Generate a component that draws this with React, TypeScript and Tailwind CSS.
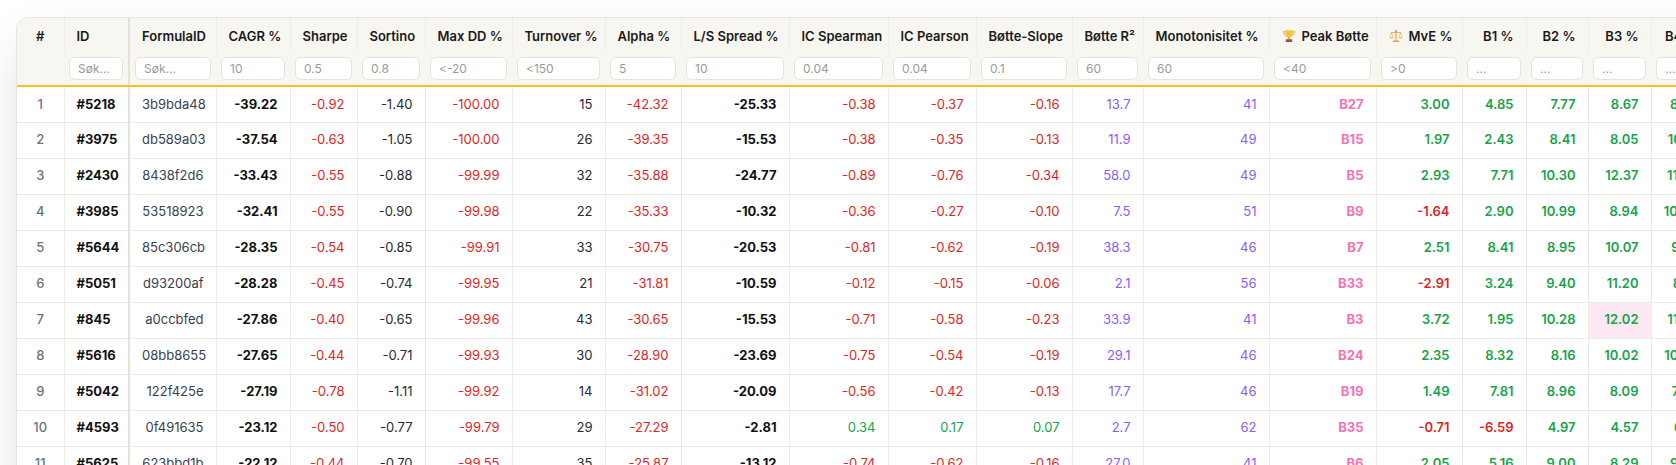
import React from "react";

type Row = {
  n: number;
  id: string;
  fid: string;
  cagr: number;
  sharpe: number;
  sortino: number;
  maxdd: number;
  turnover: number;
  alpha: number;
  ls: number;
  ics: number;
  icp: number;
  slope: number;
  r2: number;
  mono: number;
  peak: number;
  mve: number;
  b: number[];
};

const rows: Row[] = [
  { n: 1, id: "#5218", fid: "3b9bda48", cagr: -39.22, sharpe: -0.92, sortino: -1.4, maxdd: -100, turnover: 15, alpha: -42.32, ls: -25.33, ics: -0.38, icp: -0.37, slope: -0.16, r2: 13.7, mono: 41, peak: 27, mve: 3.0, b: [4.85, 7.77, 8.67, 8.92, 9.14] },
  { n: 2, id: "#3975", fid: "db589a03", cagr: -37.54, sharpe: -0.63, sortino: -1.05, maxdd: -100, turnover: 26, alpha: -39.35, ls: -15.53, ics: -0.38, icp: -0.35, slope: -0.13, r2: 11.9, mono: 49, peak: 15, mve: 1.97, b: [2.43, 8.41, 8.05, 10.14, 9.62] },
  { n: 3, id: "#2430", fid: "8438f2d6", cagr: -33.43, sharpe: -0.55, sortino: -0.88, maxdd: -99.99, turnover: 32, alpha: -35.88, ls: -24.77, ics: -0.89, icp: -0.76, slope: -0.34, r2: 58.0, mono: 49, peak: 5, mve: 2.93, b: [7.71, 10.3, 12.37, 11.58, 13.02] },
  { n: 4, id: "#3985", fid: "53518923", cagr: -32.41, sharpe: -0.55, sortino: -0.9, maxdd: -99.98, turnover: 22, alpha: -35.33, ls: -10.32, ics: -0.36, icp: -0.27, slope: -0.1, r2: 7.5, mono: 51, peak: 9, mve: -1.64, b: [2.9, 10.99, 8.94, 10.46, 9.31] },
  { n: 5, id: "#5644", fid: "85c306cb", cagr: -28.35, sharpe: -0.54, sortino: -0.85, maxdd: -99.91, turnover: 33, alpha: -30.75, ls: -20.53, ics: -0.81, icp: -0.62, slope: -0.19, r2: 38.3, mono: 46, peak: 7, mve: 2.51, b: [8.41, 8.95, 10.07, 9.73, 10.88] },
  { n: 6, id: "#5051", fid: "d93200af", cagr: -28.28, sharpe: -0.45, sortino: -0.74, maxdd: -99.95, turnover: 21, alpha: -31.81, ls: -10.59, ics: -0.12, icp: -0.15, slope: -0.06, r2: 2.1, mono: 56, peak: 33, mve: -2.91, b: [3.24, 9.4, 11.2, 8.61, 7.95] },
  { n: 7, id: "#845", fid: "a0ccbfed", cagr: -27.86, sharpe: -0.4, sortino: -0.65, maxdd: -99.96, turnover: 43, alpha: -30.65, ls: -15.53, ics: -0.71, icp: -0.58, slope: -0.23, r2: 33.9, mono: 41, peak: 3, mve: 3.72, b: [1.95, 10.28, 12.02, 11.35, 10.4] },
  { n: 8, id: "#5616", fid: "08bb8655", cagr: -27.65, sharpe: -0.44, sortino: -0.71, maxdd: -99.93, turnover: 30, alpha: -28.9, ls: -23.69, ics: -0.75, icp: -0.54, slope: -0.19, r2: 29.1, mono: 46, peak: 24, mve: 2.35, b: [8.32, 8.16, 10.02, 10.88, 9.57] },
  { n: 9, id: "#5042", fid: "122f425e", cagr: -27.19, sharpe: -0.78, sortino: -1.11, maxdd: -99.92, turnover: 14, alpha: -31.02, ls: -20.09, ics: -0.56, icp: -0.42, slope: -0.13, r2: 17.7, mono: 46, peak: 19, mve: 1.49, b: [7.81, 8.96, 8.09, 7.94, 8.73] },
  { n: 10, id: "#4593", fid: "0f491635", cagr: -23.12, sharpe: -0.5, sortino: -0.77, maxdd: -99.79, turnover: 29, alpha: -27.29, ls: -2.81, ics: 0.34, icp: 0.17, slope: 0.07, r2: 2.7, mono: 62, peak: 35, mve: -0.71, b: [-6.59, 4.97, 4.57, 6.12, 5.48] },
  { n: 11, id: "#5625", fid: "623bbd1b", cagr: -22.12, sharpe: -0.44, sortino: -0.7, maxdd: -99.55, turnover: 35, alpha: -25.87, ls: -13.12, ics: -0.74, icp: -0.62, slope: -0.16, r2: 27.0, mono: 41, peak: 6, mve: 2.05, b: [5.16, 9.0, 8.29, 9.05, 8.66] },
];

const Trophy = () => (
  <svg viewBox="0 0 16 16" className="w-[14px] h-[14px] inline-block mr-1.5 -mt-0.5">
    <path d="M4 3H2v1.4A2.6 2.6 0 0 0 4.6 7" stroke="#f2b632" strokeWidth="1.3" fill="none" />
    <path d="M12 3h2v1.4A2.6 2.6 0 0 1 11.4 7" stroke="#f2b632" strokeWidth="1.3" fill="none" />
    <path d="M4 1.5h8v4.2a4 4 0 0 1-8 0z" fill="#f7c242" />
    <rect x="7" y="9.4" width="2" height="2.6" fill="#e0a526" />
    <rect x="4.3" y="11.8" width="7.4" height="3" rx="0.6" fill="#8d5b3a" />
  </svg>
);

const Scale = () => (
  <svg viewBox="0 0 16 16" className="w-[14px] h-[14px] inline-block mr-1.5 -mt-0.5">
    <rect x="7.4" y="2" width="1.2" height="11.5" fill="#e29a3a" />
    <circle cx="8" cy="2.2" r="1.2" fill="#e29a3a" />
    <rect x="2" y="3.6" width="12" height="1.1" rx="0.5" fill="#e29a3a" />
    <path d="M3 4.6 1.3 9M3 4.6 4.7 9M13 4.6 11.3 9M13 4.6 14.7 9" stroke="#e29a3a" strokeWidth="0.6" />
    <path d="M0.8 9h4.4a2.2 2.2 0 0 1-4.4 0z" fill="#f5c46e" />
    <path d="M10.8 9h4.4a2.2 2.2 0 0 1-4.4 0z" fill="#f5c46e" />
    <rect x="4.5" y="13.2" width="7" height="1.6" rx="0.6" fill="#e29a3a" />
  </svg>
);

const widths = [
  "w-[47px]", "w-[65px]", "w-[87px]", "w-[74px]", "w-[67px]", "w-[68px]", "w-[87px]",
  "w-[93px]", "w-[76px]", "w-[108px]", "w-[99px]", "w-[88px]", "w-[96px]", "w-[71px]",
  "w-[126px]", "w-[107px]", "w-[86px]", "w-[64px]", "w-[62px]", "w-[63px]", "w-[60px]", "w-[63px]",
];

const headers: { label: React.ReactNode; filter?: string }[] = [
  { label: "#" },
  { label: "ID", filter: "Søk..." },
  { label: "FormulaID", filter: "Søk..." },
  { label: "CAGR %", filter: "10" },
  { label: "Sharpe", filter: "0.5" },
  { label: "Sortino", filter: "0.8" },
  { label: "Max DD %", filter: "<-20" },
  { label: "Turnover %", filter: "<150" },
  { label: "Alpha %", filter: "5" },
  { label: "L/S Spread %", filter: "10" },
  { label: "IC Spearman", filter: "0.04" },
  { label: "IC Pearson", filter: "0.04" },
  { label: "Bøtte-Slope", filter: "0.1" },
  { label: "Bøtte R²", filter: "60" },
  { label: "Monotonisitet %", filter: "60" },
  { label: <><Trophy />Peak Bøtte</>, filter: "<40" },
  { label: <><Scale />MvE %</>, filter: ">0" },
  { label: "B1 %", filter: "..." },
  { label: "B2 %", filter: "..." },
  { label: "B3 %", filter: "..." },
  { label: "B4 %", filter: "..." },
  { label: "B5 %", filter: "..." },
];

const sign = (v: number) => (v < 0 ? "text-[#dc2626]" : "text-[#16a34a]");
const f2 = (v: number) => v.toFixed(2);

const td = "h-[36px] px-3 border-b border-r border-[#eeebe5] text-right whitespace-nowrap";

export default function App() {
  return (
    <div
      className="h-screen w-screen overflow-hidden bg-white text-[13px] text-[#1f2937]"
      style={{ fontFamily: "Inter, 'Noto Sans', sans-serif" }}
    >
      <div className="ml-4 mt-[17px] w-max rounded-tl-xl border border-[#e8e5de] overflow-hidden shadow-[0_24px_60px_-10px_rgba(0,0,0,0.16)] bg-white">
        <table className="table-fixed border-collapse w-[1757px]">
          <colgroup>
            {widths.map((w, i) => (
              <col key={i} className={w} />
            ))}
          </colgroup>
          <thead className="bg-[#f8f6f1]">
            <tr>
              {headers.map((h, i) => (
                <th
                  key={i}
                  className={`h-[33px] pt-1 px-3 font-semibold text-[#1a1a1a] whitespace-nowrap border-r border-[#efece5] ${
                    i === 0 ? "text-center" : i === 1 ? "text-left border-r-2 border-r-[#e6e2da]" : "text-right"
                  }`}
                >
                  {h.label}
                </th>
              ))}
            </tr>
            <tr>
              {headers.map((h, i) => (
                <th
                  key={i}
                  className={`h-[35px] px-[5px] border-b-2 border-b-[#fbbf24] font-normal ${
                    i === 1 ? "border-r-2 border-r-[#e6e2da]" : ""
                  }`}
                >
                  {h.filter && (
                    <input
                      placeholder={h.filter}
                      className="w-full h-[23px] px-2 rounded-md border border-[#e6e3dc] bg-white text-[12px] placeholder:text-[#9a9a9a] outline-none"
                    />
                  )}
                </th>
              ))}
            </tr>
          </thead>
          <tbody>
            {rows.map((r) => (
              <tr key={r.n}>
                <td className={`${td} !text-center text-[#6b7280] font-medium`}>{r.n}</td>
                <td className={`${td} !text-left font-bold text-[#111] border-r-2 border-r-[#e6e2da]`}>{r.id}</td>
                <td className={`${td} text-[#374151]`}>{r.fid}</td>
                <td className={`${td} font-bold text-[#111]`}>{f2(r.cagr)}</td>
                <td className={`${td} ${sign(r.sharpe)}`}>{f2(r.sharpe)}</td>
                <td className={`${td} text-[#1f2937]`}>{f2(r.sortino)}</td>
                <td className={`${td} text-[#dc2626]`}>{f2(r.maxdd)}</td>
                <td className={`${td} text-[#1f2937]`}>{r.turnover}</td>
                <td className={`${td} ${sign(r.alpha)}`}>{f2(r.alpha)}</td>
                <td className={`${td} font-bold text-[#111]`}>{f2(r.ls)}</td>
                <td className={`${td} ${sign(r.ics)}`}>{f2(r.ics)}</td>
                <td className={`${td} ${sign(r.icp)}`}>{f2(r.icp)}</td>
                <td className={`${td} ${sign(r.slope)}`}>{f2(r.slope)}</td>
                <td className={`${td} text-[#8b5cf6]`}>{r.r2.toFixed(1)}</td>
                <td className={`${td} text-[#8b5cf6]`}>{r.mono}</td>
                <td className={`${td} font-bold text-[#f472b6]`}>B{r.peak}</td>
                <td className={`${td} font-semibold ${sign(r.mve)}`}>{f2(r.mve)}</td>
                {r.b.map((v, i) => (
                  <td
                    key={i}
                    className={`${td} font-semibold ${sign(v)} ${r.peak === i + 1 ? "bg-[#fce7f3]" : ""}`}
                  >
                    {f2(v)}
                  </td>
                ))}
              </tr>
            ))}
          </tbody>
        </table>
      </div>
    </div>
  );
}
